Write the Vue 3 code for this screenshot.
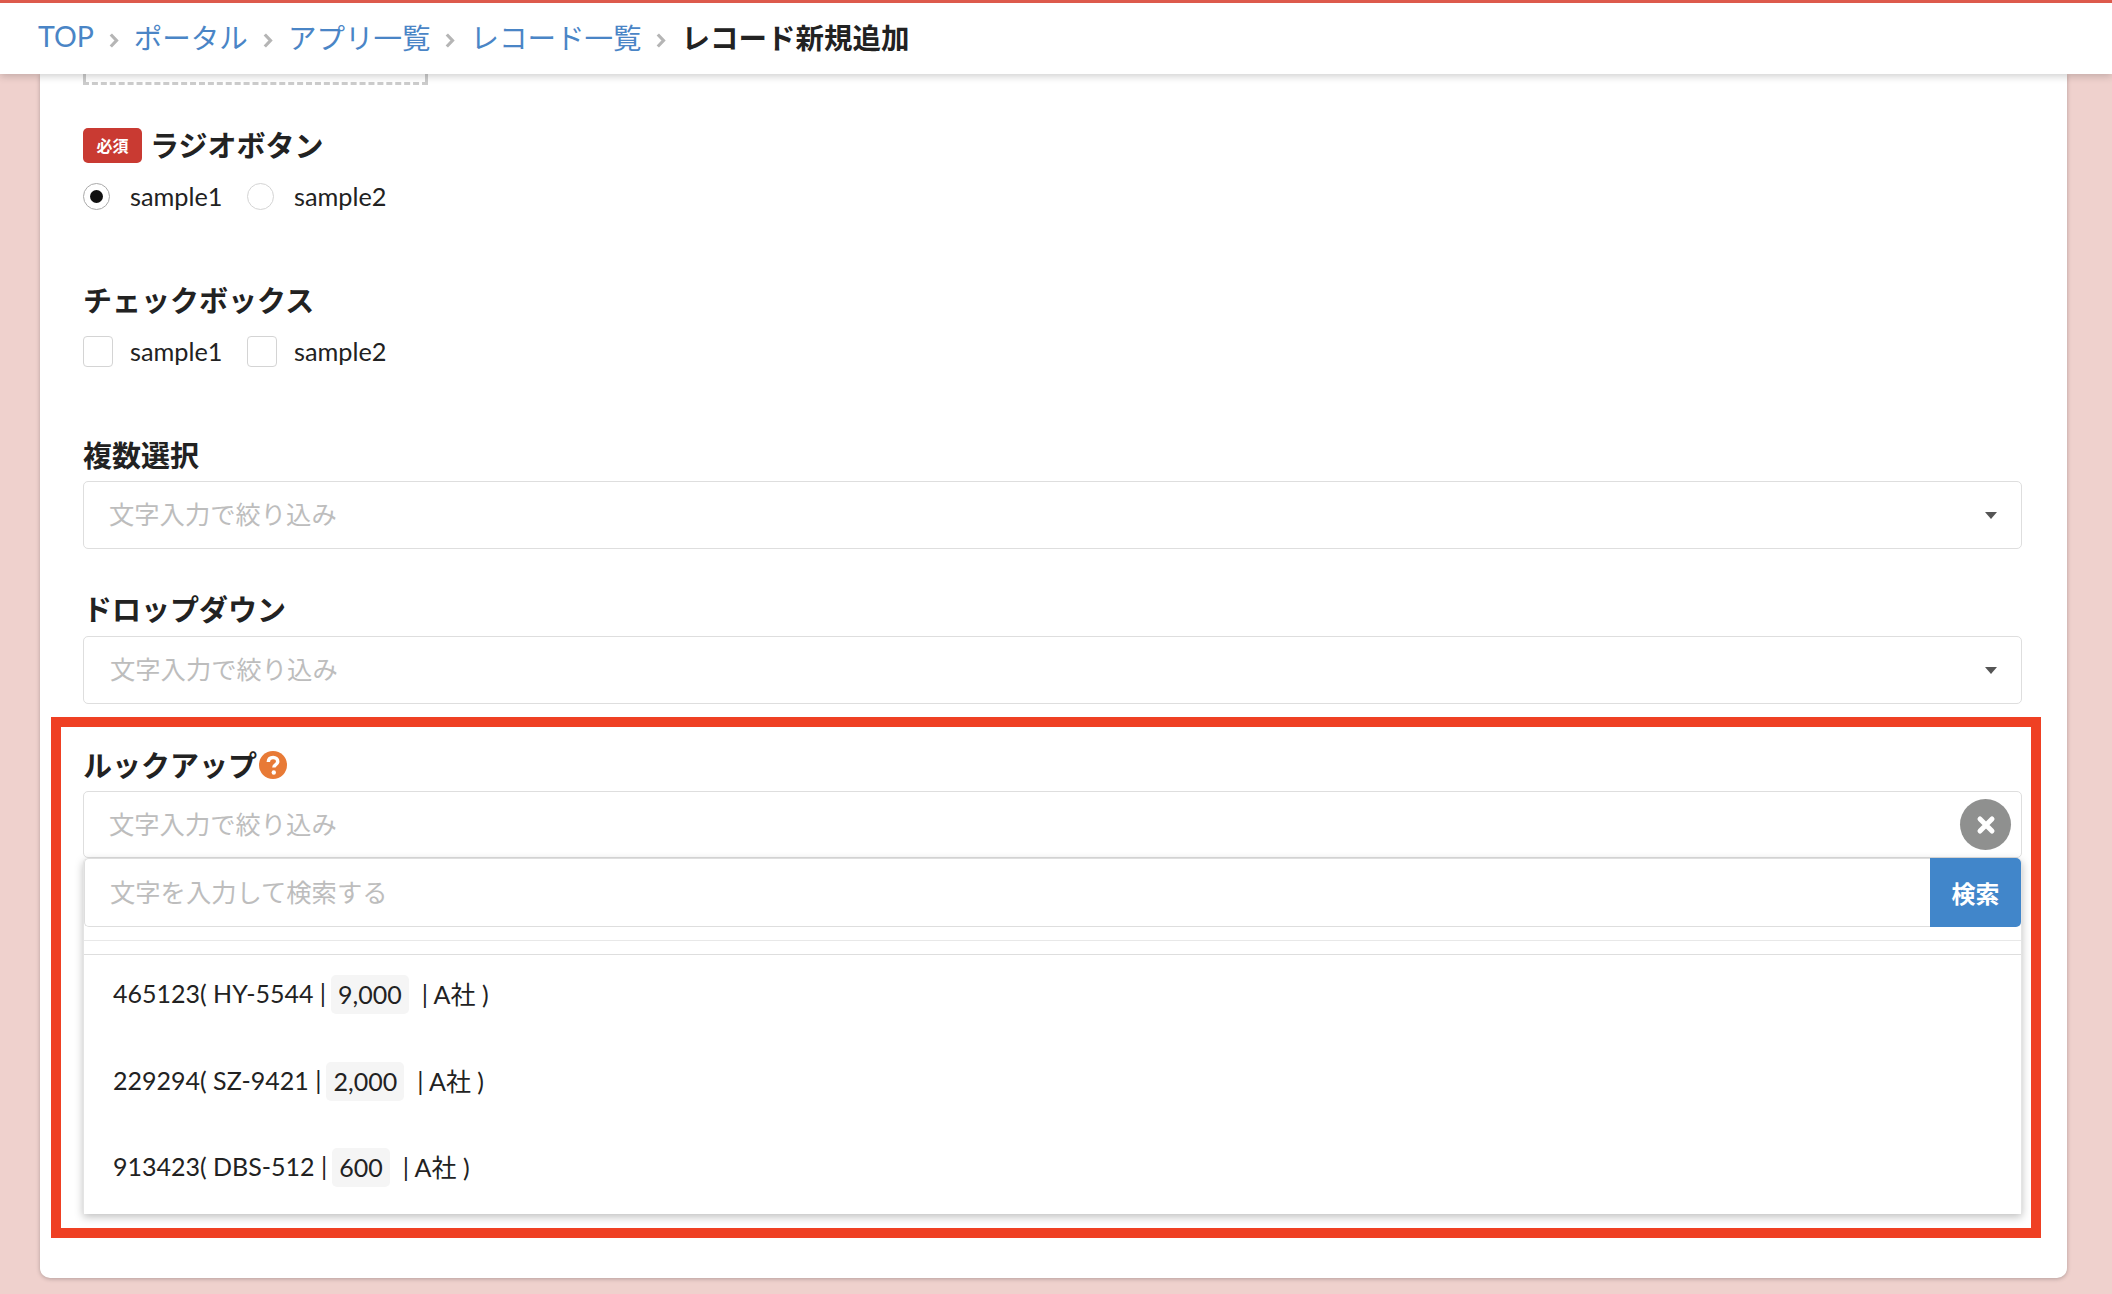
<script setup>
const crumbs = ['TOP', 'ポータル', 'アプリ一覧', 'レコード一覧']
const options = ['sample1', 'sample2']
const records = [
  { id: '465123', code: 'HY-5544', price: '9,000' },
  { id: '229294', code: 'SZ-9421', price: '2,000' },
  { id: '913423', code: 'DBS-512', price: '600' },
]
</script>

<template>
  <div class="page">
    <header class="topbar">
      <nav class="crumbs">
        <template v-for="c in crumbs" :key="c">
          <a class="crumb">{{ c }}</a>
          <svg class="chev" viewBox="0 0 10 15" width="10" height="15"><path d="M1.800 1.500 7.500 7.500l-5.700 6" fill="none" stroke="#b5b5b5" stroke-width="3.200"/></svg>
        </template>
        <strong class="crumb-current">レコード新規追加</strong>
      </nav>
    </header>

    <main class="card">
      <div class="dashed"></div>

      <div class="label first">
        <span class="req">必須</span>
        <span>ラジオボタン</span>
      </div>
      <div class="choices radios">
        <label v-for="(o, i) in options" :key="o" class="choice">
          <span class="radio" :class="{ on: i === 0 }"></span>
          <span class="choice-text">{{ o }}</span>
        </label>
      </div>

      <div class="label check-label">チェックボックス</div>
      <div class="choices checks">
        <label v-for="o in options" :key="o" class="choice">
          <span class="check"></span>
          <span class="choice-text">{{ o }}</span>
        </label>
      </div>

      <div class="label multi-label">複数選択</div>
      <div class="select multi">
        <span class="ph">文字入力で絞り込み</span>
        <span class="caret"></span>
      </div>

      <div class="label drop-label">ドロップダウン</div>
      <div class="select drop">
        <span class="ph ph2">文字入力で絞り込み</span>
        <span class="caret"></span>
      </div>

      <section class="highlight">
        <div class="label lookup-label">
          <span>ルックアップ</span>
          <svg class="help" viewBox="0 0 28 28" width="28" height="28">
            <circle cx="14" cy="14" r="14" fill="#e87a36"/>
            <path d="M9.300 11c.2-2.900 2.100-4.400 4.800-4.400 2.700 0 4.600 1.600 4.600 3.900 0 1.800-1 2.700-2.300 3.500-1.100.7-1.500 1.200-1.500 2.600" fill="none" stroke="#fff" stroke-width="3.500"/>
            <circle cx="14.800" cy="21.500" r="2.200" fill="#fff"/>
          </svg>
        </div>
        <div class="select lookup">
          <span class="ph">文字入力で絞り込み</span>
          <span class="clear">
            <svg viewBox="0 0 20 20" width="20" height="20"><path d="M4 4l12 12M16 4 4 16" stroke="#fff" stroke-width="5" stroke-linecap="round"/></svg>
          </span>
        </div>
        <div class="panel">
          <div class="search">
            <div class="search-input"><span class="ph ph3">文字を入力して検索する</span></div>
            <button class="search-btn">検索</button>
          </div>
          <div class="rule"></div>
          <ul class="records">
            <li v-for="r in records" :key="r.id" class="record">
              <span class="rec-text">{{ r.id }}( {{ r.code }} |</span>
              <span class="chip">{{ r.price }}</span>
              <span class="rec-text">| A社 )</span>
            </li>
          </ul>
        </div>
      </section>
    </main>
  </div>
</template>

<style>
html, body { margin: 0; background: #efd1cd; }
</style>

<style scoped>
.page {
  height: 1294px;
  overflow: hidden;
  background: #efd1cd;
  font-family: Lato, "Noto Sans CJK JP", sans-serif;
  color: #222;
}
.topbar {
  position: relative;
  z-index: 2;
  box-sizing: border-box;
  height: 74px;
  background: #fff;
  border-top: 3px solid #dd5a4c;
  box-shadow: 0 2px 8px rgba(0, 0, 0, .2);
  padding-left: 38px;
}
.crumbs {
  box-sizing: border-box;
  display: flex;
  align-items: center;
  height: 71px;
  padding-bottom: 5px;
  font-size: 28.500px;
}
.crumb { color: #4a85c6; }
.chev { margin: 9px 15px 0 15px; }
.crumb-current { font-weight: 700; color: #222; }
.card {
  box-sizing: border-box;
  margin: 0 45px 0 40px;
  height: 1204px;
  padding: 0 45px 0 43px;
  background: #fff;
  border-radius: 0 0 10px 10px;
  box-shadow: 0 1px 4px rgba(0, 0, 0, .25);
}
.dashed {
  box-sizing: border-box;
  width: 345px;
  height: 11px;
  border: 3px dashed #ccc;
  border-top: 0;
}
.label {
  box-sizing: border-box;
  display: flex;
  align-items: center;
  height: 40px;
  padding-bottom: 2px;
  font-size: 29px;
  font-weight: 700;
  color: #222;
}
.first { margin-top: 40px; }
.check-label { margin-top: 70px; }
.multi-label { margin-top: 68px; }
.drop-label { margin-top: 40px; }
.req {
  display: flex;
  align-items: center;
  justify-content: center;
  width: 59px;
  height: 35px;
  margin: 2px 8px 0 0;
  border-radius: 5px;
  background: #c93a32;
  color: #fff;
  font-size: 16px;
}
.help { margin-top: 2px; }
.choices { display: flex; align-items: center; font-size: 25.300px; }
.radios { margin-top: 18px; height: 27px; }
.checks { margin-top: 16px; height: 31px; }
.choice { display: flex; align-items: center; margin-right: 25px; }
.choice-text { width: 92px; margin-bottom: 2px; }
.radio {
  position: relative;
  box-sizing: border-box;
  width: 27px;
  height: 27px;
  margin-right: 20px;
  border: 1px solid #d4d4d4;
  border-radius: 50%;
}
.radio.on { border-color: #aaa; }
.radio.on::after {
  content: "";
  position: absolute;
  left: 6px;
  top: 6px;
  width: 13px;
  height: 13px;
  border-radius: 50%;
  background: #111;
}
.check {
  box-sizing: border-box;
  width: 30px;
  height: 31px;
  margin-right: 17px;
  border: 1px solid #d4d4d4;
  border-radius: 4px;
}
.select {
  box-sizing: border-box;
  display: flex;
  align-items: center;
  justify-content: space-between;
  height: 68px;
  padding: 0 24px 0 25px;
  border: 1px solid #dedede;
  border-radius: 5px;
  font-size: 25.300px;
}
.multi { margin-top: 6px; }
.drop { margin-top: 7px; }
.ph { color: #bdbdbd; margin-bottom: 4px; }
.ph2 { margin-left: 1px; }
.caret {
  width: 0;
  height: 0;
  border-left: 6.500px solid transparent;
  border-right: 6.500px solid transparent;
  border-top: 7px solid #555;
}
.highlight {
  margin: 13px -19px 0 -32px;
  padding: 18px 9px 14px 22px;
  border: 10px solid #ef4023;
}
.lookup-label { gap: 2px; }
.lookup { margin-top: 6px; height: 67px; padding-right: 10px; }
.clear {
  display: flex;
  align-items: center;
  justify-content: center;
  width: 51px;
  height: 51px;
  border-radius: 50%;
  background: #8f908f;
}
.panel {
  box-sizing: border-box;
  height: 356px;
  background: #fff;
  border-left: 1px solid #e4e4e4;
  border-right: 1px solid #e4e4e4;
  box-shadow: 0 3px 8px rgba(0, 0, 0, .25);
  border-radius: 5px 5px 0 0;
  font-size: 25.300px;
}
.search {
  display: flex;
  height: 69px;
}
.search-input {
  box-sizing: border-box;
  flex: 1;
  display: flex;
  align-items: center;
  padding-left: 25px;
  border: 1px solid #dedede;
  border-right: 0;
  border-radius: 5px 0 0 5px;
}
.search-btn {
  width: 91px;
  border: 0;
  padding: 0;
  border-radius: 0 5px 5px 0;
  background: #4186ca;
  color: #fff;
  font: 700 24px Lato, "Noto Sans CJK JP", sans-serif;
}
.rule {
  height: 13px;
  margin-top: 13px;
  border-top: 1px solid #e8e8e8;
  border-bottom: 1px solid #dedede;
}
.records {
  list-style: none;
  margin: 0;
  padding: 0;
  font-size: 25px;
}
.record {
  display: flex;
  align-items: center;
  height: 39px;
  margin-top: 47.500px;
  padding-left: 29px;
  color: #222;
}
.record:first-child { margin-top: 20px; }
.rec-text { margin-bottom: 3px; }
.chip {
  margin: 0 13px 0 5px;
  padding: 0 7px;
  height: 39px;
  line-height: 38px;
  border-radius: 5px;
  background: #f5f5f5;
}
</style>
